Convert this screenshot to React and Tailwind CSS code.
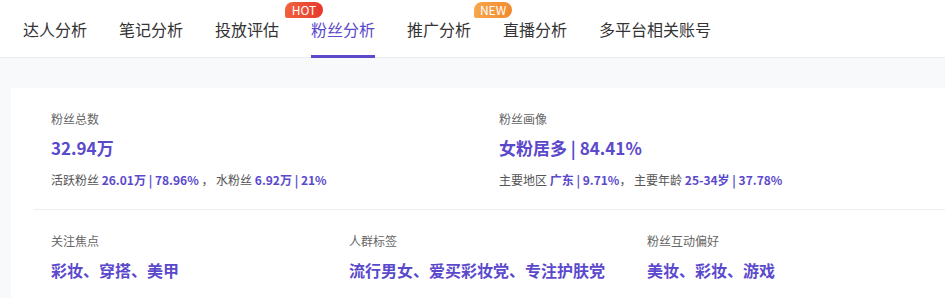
const tabs = [
  { name: '达人分析' },
  { name: '笔记分析' },
  { name: '投放评估' },
  { name: '粉丝分析', active: true, badge: 'HOT' },
  { name: '推广分析' },
  { name: '直播分析', badge: 'NEW' },
  { name: '多平台相关账号' },
];

function Badge({ type }) {
  const color =
    type === 'HOT'
      ? 'bg-gradient-to-r from-[#f0623c] to-[#e8352c]'
      : 'bg-gradient-to-r from-[#f7a64a] to-[#f28a2e]';
  return (
    <span
      className={`absolute top-[2px] -left-[26px] h-4 w-[38px] rounded-t-[8px] rounded-br-[8px] rounded-bl-[2px] ${color} text-white text-[12px] leading-4 text-center`}
    >
      {type}
    </span>
  );
}

function Stat({ label, children }) {
  return (
    <div>
      <div className="text-[12px] leading-4 text-[#666]">{label}</div>
      {children}
    </div>
  );
}

export default function App() {
  const purple = 'text-[#5b49cc]';
  return (
    <div
      className="w-[945px] h-[298px] overflow-hidden bg-[#f8f9fb]"
      style={{ fontFamily: '"Noto Sans CJK SC", "Noto Sans", sans-serif' }}
    >
      {/* Tabs */}
      <nav className="h-[58px] bg-white border-b border-[#ececec] flex items-stretch pl-[23px] gap-8">
        {tabs.map((t) => (
          <div key={t.name} className="relative flex items-center">
            {t.badge === 'HOT' && <Badge type="HOT" />}
            {t.badge === 'NEW' && (
              <span className="absolute top-[2px] -left-[29px] h-4 w-[38px] rounded-t-[8px] rounded-br-[8px] rounded-bl-[2px] bg-gradient-to-r from-[#f7a64a] to-[#f28a2e] text-white text-[12px] leading-4 text-center">
                NEW
              </span>
            )}
            <span
              className={`text-[16px] leading-5 ${t.active ? 'text-[#5b49cc]' : 'text-[#333]'}`}
            >
              {t.name}
            </span>
            {t.active && (
              <span className="absolute left-0 right-0 -bottom-px h-[3px] bg-[#5b49cc]" />
            )}
          </div>
        ))}
      </nav>

      {/* Card */}
      <div className="mt-[30px] ml-[11px] w-[960px] bg-white px-[23px] pt-[23px]">
        <div className="grid grid-cols-[448px_1fr] px-[17px] pb-[21px]">
          <Stat label="粉丝总数">
            <div className={`mt-[9px] text-[17px] leading-6 font-bold ${purple}`}>32.94万</div>
            <div className="mt-[12px] text-[12px] leading-4 text-[#555]">
              活跃粉丝 <b className={purple}>26.01万 | 78.96%</b> ，&nbsp;水粉丝{' '}
              <b className={purple}>6.92万 | 21%</b>
            </div>
          </Stat>
          <Stat label="粉丝画像">
            <div className={`mt-[9px] text-[17px] leading-6 font-bold ${purple}`}>女粉居多 | 84.41%</div>
            <div className="mt-[12px] text-[12px] leading-4 text-[#555]">
              主要地区 <b className={purple}>广东 | 9.71%</b>，&nbsp;主要年龄{' '}
              <b className={purple}>25-34岁 | 37.78%</b>
            </div>
          </Stat>
        </div>
        <div className="border-t border-[#eeeeee]" />
        <div className="grid grid-cols-[298px_298px_1fr] px-[17px] pt-[23px] pb-4">
          <Stat label="关注焦点">
            <div className={`mt-[9px] text-[16px] leading-6 font-bold ${purple}`}>彩妆、穿搭、美甲</div>
          </Stat>
          <Stat label="人群标签">
            <div className={`mt-[9px] text-[16px] leading-6 font-bold ${purple}`}>流行男女、爱买彩妆党、专注护肤党</div>
          </Stat>
          <Stat label="粉丝互动偏好">
            <div className={`mt-[9px] text-[16px] leading-6 font-bold ${purple}`}>美妆、彩妆、游戏</div>
          </Stat>
        </div>
      </div>
    </div>
  );
}
